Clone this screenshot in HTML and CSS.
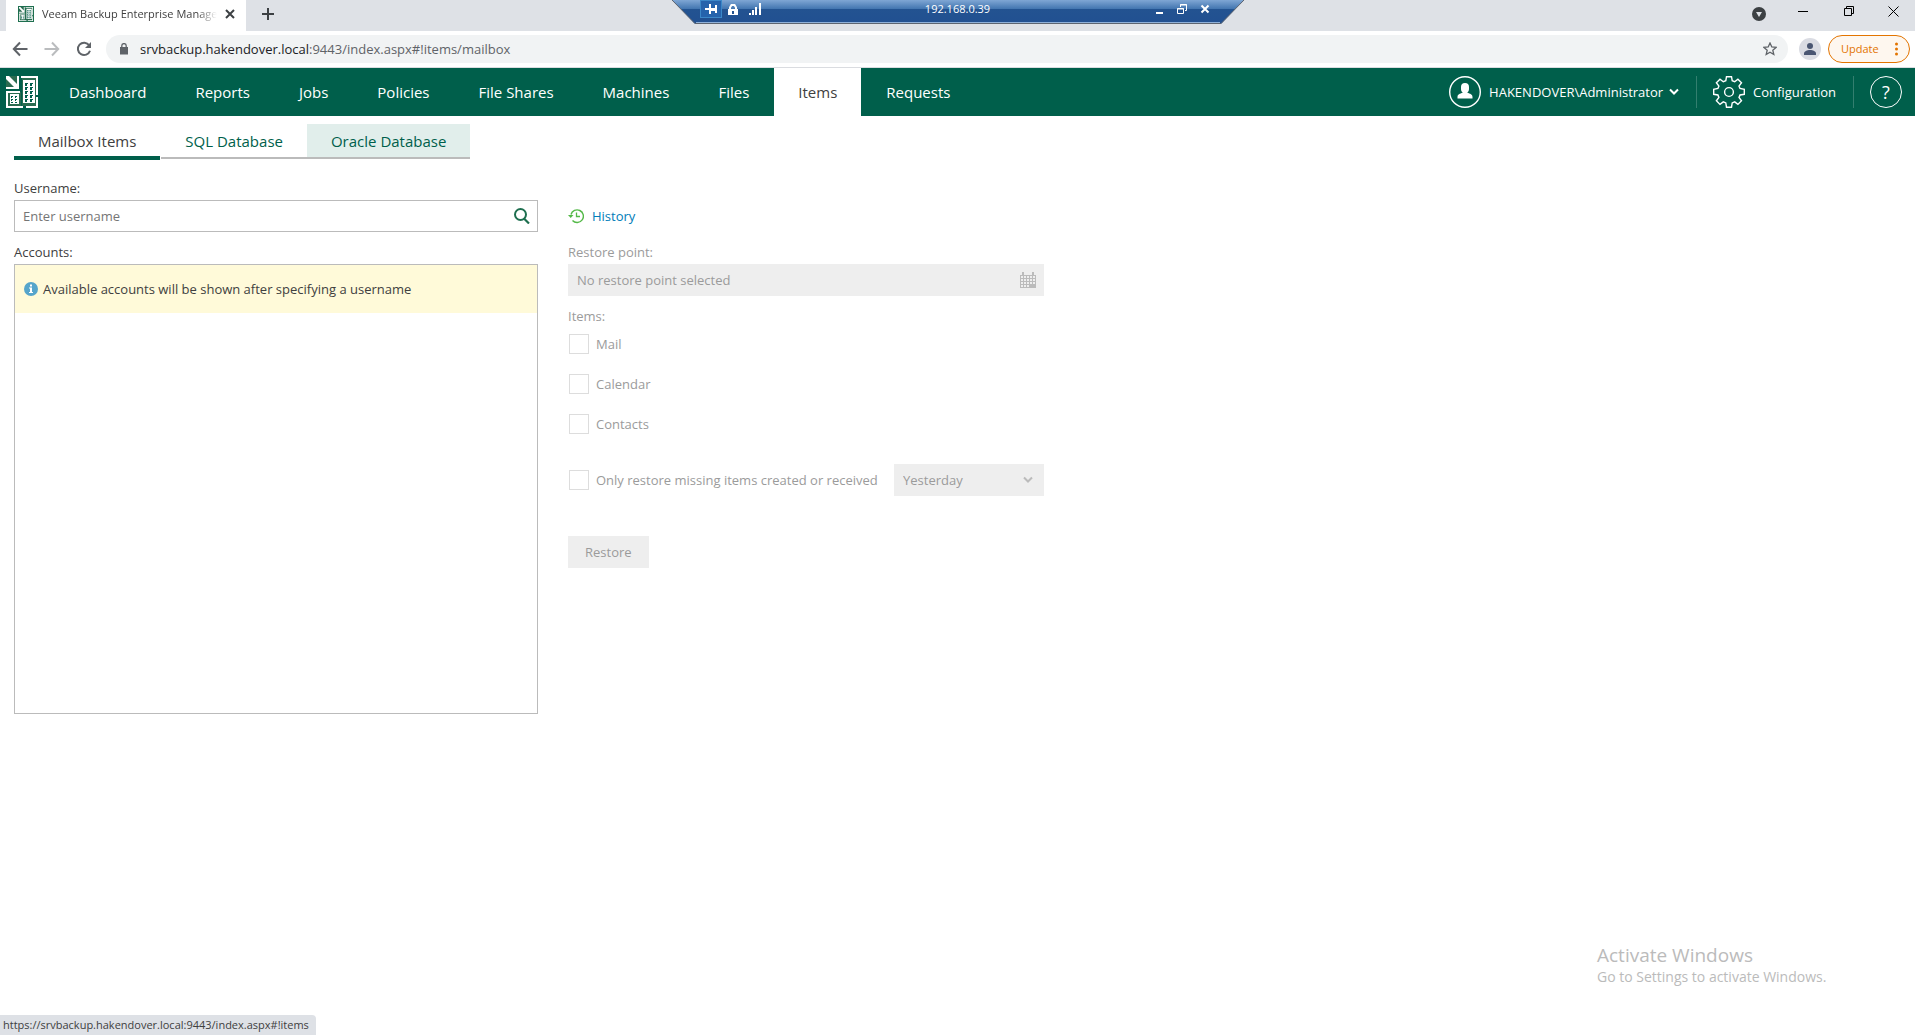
FILE: index.html
```html
<!DOCTYPE html>
<html lang="en">
<head>
<meta charset="utf-8">
<title>Veeam Backup Enterprise Manager</title>
<link rel="stylesheet" href="styles.css">
</head>
<body>
<svg class="defs" width="0" height="0" aria-hidden="true">
  <symbol id="logo" viewBox="0 0 32 32">
    <path fill="#2a6b50" d="M0 0h12v12H0zM16 2h14v28H16zM2 16h13v14H2z"/>
    <g fill="#fff">
      <path d="M0 0h3l8 8V0h2v13H0v-2h8L0 3z"/>
      <path d="M15 0h17v19h-2V2H15zM30 21h2v11H20v-2h10zM0 15h14v2H2v13h15v2H0z"/>
      <path d="M17 4h12v23H17zM4 18h9v10H4z"/>
    </g>
    <g fill="#005f4b">
      <path d="M19 7h3v1h-1v2h-2zM24 7h3v1h-1v2h-2zM19 11h3v1h-1v2h-2zM24 11h3v1h-1v2h-2zM19 15h3v1h-1v2h-2zM24 15h3v1h-1v2h-2zM19 19h3v1h-1v2h-2zM24 19h3v1h-1v2h-2zM19 23h3v1h-1v2h-2zM24 23h3v1h-1v2h-2z"/>
      <path d="M5 20h2v1H6v1H5zM9 20h2v1h-1v1H9zM5 23h2v1H6v1H5zM9 23h2v1h-1v1H9zM5 26h2v1H5zM9 26h2v1H9z"/>
    </g>
  </symbol>
</svg>

<div class="tabstrip">
  <div class="browser-tab">
    <svg class="favicon" width="16" height="16" viewBox="-2 -2 36 36"><path fill="#1e6f4f" d="M-2-2h36v36H-2z"/><use href="#logo" width="32" height="32"/></svg>
    <span class="tab-title">Veeam Backup Enterprise Manager</span>
    <button class="icon-btn tab-close" aria-label="Close tab"><svg width="10" height="10" viewBox="0 0 10 10"><path d="M1 1l8 8M9 1l-8 8" stroke="#3c4043" stroke-width="2"/></svg></button>
  </div>
  <button class="icon-btn new-tab" aria-label="New tab"><svg width="12" height="12" viewBox="0 0 12 12"><path d="M6 0v12M0 6h12" stroke="#3c4043" stroke-width="2"/></svg></button>
  <div class="window-controls">
    <button class="icon-btn tab-search" aria-label="Search tabs"><svg width="14" height="14" viewBox="0 0 14 14"><circle cx="7" cy="7" r="7" fill="#3c4043"/><path d="M4 5h6L7 10z" fill="#dee1e6"/></svg></button>
    <button class="icon-btn" aria-label="Minimize"><svg width="10" height="10" viewBox="0 0 10 10"><path d="M0 5.500h10" stroke="#000"/></svg></button>
    <button class="icon-btn" aria-label="Restore down"><svg width="10" height="10" viewBox="0 0 10 10"><path d="M.5 2.500h7v7h-7zM2.500 2.500v-2h7v7h-2" fill="none" stroke="#000"/></svg></button>
    <button class="icon-btn" aria-label="Close"><svg width="11" height="11" viewBox="0 0 11 11"><path d="M.5.5l10 10M10.500.5l-10 10" stroke="#000"/></svg></button>
  </div>
</div>

<div class="rdp-bar">
  <svg class="rdp-shape" viewBox="0 0 572 25" preserveAspectRatio="none" aria-hidden="true">
    <defs><linearGradient id="rdp" x1="0" y1="0" x2="0" y2="1"><stop offset="0" stop-color="#7fa6d4"/><stop offset=".36" stop-color="#4477b1"/><stop offset=".37" stop-color="#235391"/><stop offset="1" stop-color="#215091"/></linearGradient></defs>
    <path d="M0 0h572l-23 24H23z" fill="url(#rdp)"/>
    <path d="M24 22.500h524" stroke="#8fb0d8"/>
    <path d="M0 0l23 23.500h526L572 0" fill="none" stroke="#5c6470"/>
  </svg>
  <div class="rdp-content">
    <div class="rdp-left">
      <button class="icon-btn pin" aria-label="Pin"><svg width="12" height="10" viewBox="0 0 12 10"><path d="M0 4h5v2H0zM4 0h2v10H4zM6 4h4v3H6zM10 1h2v8h-2z" fill="#fff"/></svg></button>
      <svg width="10" height="11" viewBox="0 0 10 11"><path d="M0 5h10v6H0z" fill="#fff"/><path d="M2 5V3.500L3.500 1h3L8 3.500V5" fill="none" stroke="#fff" stroke-width="2"/><path d="M4 7h2v3H4z" fill="#235391"/></svg>
      <svg width="12" height="12" viewBox="0 0 12 12"><path d="M0 10h2v2H0zM3 7h2v5H3zM6 4h2v8H6zM10 0h2v12h-2z" fill="#fff"/></svg>
    </div>
    <span>192.168.0.39</span>
    <div class="rdp-right">
      <button class="icon-btn" aria-label="Minimize session"><svg width="10" height="10" viewBox="0 0 10 10"><path d="M2 8h7v2H2z" fill="#fff"/></svg></button>
      <button class="icon-btn" aria-label="Restore session"><svg width="10" height="10" viewBox="0 0 10 10"><path d="M.5 4.500h6v5h-6zM3.500 3V.5h6v6H8M0 5h7M3 1h7" fill="none" stroke="#fff"/></svg></button>
      <button class="icon-btn" aria-label="Close session"><svg width="10" height="10" viewBox="0 0 10 10"><path d="M1.500 1.500l7 7M8.500 1.500l-7 7" stroke="#fff" stroke-width="2"/></svg></button>
    </div>
  </div>
</div>

<div class="toolbar">
  <div class="nav-buttons">
    <button class="icon-btn" aria-label="Back"><svg width="16" height="16" viewBox="0 0 16 16"><path d="M8 1.500L1.800 8 8 14.500M2 8h13.500" fill="none" stroke="#5f6368" stroke-width="2"/></svg></button>
    <button class="icon-btn" aria-label="Forward" disabled><svg width="16" height="16" viewBox="0 0 16 16"><path d="M8 1.500L14.200 8 8 14.500M14 8H.5" fill="none" stroke="#babcbe" stroke-width="2"/></svg></button>
    <button class="icon-btn" aria-label="Reload"><svg width="16" height="16" viewBox="0 0 16 16"><path d="M13.200 4.300A6.200 6.200 0 1 0 14 9.800" fill="none" stroke="#5f6368" stroke-width="2"/><path d="M15 1v6H9z" fill="#5f6368"/></svg></button>
  </div>
  <div class="omnibox">
    <svg width="8" height="12" viewBox="0 0 8 12"><path d="M0 4h8v7.500H0z" fill="#5f6368"/><path d="M1.800 5V2.800a2.200 2.200 0 0 1 4.400 0V5" fill="none" stroke="#5f6368" stroke-width="1.300"/></svg>
    <span class="url">srvbackup.hakendover.local<span class="url-rest">:9443/index.aspx#!items/mailbox</span></span>
    <button class="icon-btn star" aria-label="Bookmark"><svg width="14" height="14" viewBox="0 0 14 14"><path d="M7 1l1.800 4 4.200.4-3.200 2.800 1 4.300L7 10.200l-3.800 2.300 1-4.300L1 5.400 5.200 5z" fill="none" stroke="#5f6368" stroke-width="1.300"/></svg></button>
  </div>
  <button class="icon-btn" aria-label="Profile"><svg width="22" height="22" viewBox="0 0 22 22"><circle cx="11" cy="11" r="11" fill="#dadce3"/><circle cx="11" cy="8" r="3" fill="#4a5672"/><path d="M5 17v-1.500c0-2 3-3.500 6-3.500s6 1.500 6 3.500V17z" fill="#4a5672"/></svg></button>
  <button class="update">Update<svg width="3" height="14" viewBox="0 0 3 14"><g fill="#e37400"><circle cx="1.500" cy="2" r="1.500"/><circle cx="1.500" cy="7" r="1.500"/><circle cx="1.500" cy="12" r="1.500"/></g></svg></button>
</div>

<header class="app-header">
  <a class="app-logo" href="#dashboard" aria-label="Home"><svg width="32" height="32"><use href="#logo"/></svg></a>
  <nav class="main-nav">
    <a href="#dashboard">Dashboard</a>
    <a href="#reports">Reports</a>
    <a href="#jobs">Jobs</a>
    <a href="#policies">Policies</a>
    <a href="#shares">File Shares</a>
    <a href="#machines">Machines</a>
    <a href="#files">Files</a>
    <a href="#items" class="active">Items</a>
    <a href="#requests">Requests</a>
  </nav>
  <div class="header-tools">
    <button class="tool user">
      <svg width="32" height="32" viewBox="0 0 32 32"><circle cx="16" cy="16" r="15.300" fill="none" stroke="#fff" stroke-width="1.400"/><path d="M12 11a4 4 0 0 1 8 0v2c0 1.800-.8 3-1.800 3.800 3 .8 5.300 1.700 5.300 4.200v1.500h-15V21c0-2.500 2.300-3.400 5.300-4.200-1-.8-1.800-2-1.800-3.800z" fill="#fff"/></svg>
      <span>HAKENDOVER\Administrator</span>
      <svg class="caret" width="10" height="8" viewBox="0 0 10 8"><path d="M1 1.500l4 4 4-4" fill="none" stroke="#fff" stroke-width="2"/></svg>
    </button>
    <button class="tool config">
      <svg width="32" height="32" viewBox="0 0 32 32"><path d="M13.500.7h5l.7 4 2.500 1 3.200-2.500 3.600 3.600-2.500 3.200 1 2.500 4.300.8v5l-4.300.7-1 2.500 2.500 3.300-3.600 3.600-3.200-2.500-2.500 1-.7 4.300h-5l-.7-4.300-2.500-1-3.300 2.500-3.600-3.600 2.500-3.300-1-2.500-4.200-.7v-5l4.200-.8 1-2.500L3.400 6.800 7 3.200l3.300 2.500 2.500-1z" fill="none" stroke="#fff" stroke-width="1.400"/><circle cx="16" cy="16" r="4.400" fill="none" stroke="#fff" stroke-width="1.400"/></svg>
      <span>Configuration</span>
    </button>
    <button class="help" aria-label="Help">?</button>
  </div>
</header>

<main class="page">
  <nav class="sub-tabs">
    <a href="#mailbox" class="current">Mailbox Items</a>
    <a href="#sql">SQL Database</a>
    <a href="#oracle" class="hovered">Oracle Database</a>
  </nav>
  <div class="columns">
    <section class="accounts">
      <label class="field-label" for="username">Username:</label>
      <div class="search-box">
        <input id="username" type="text" placeholder="Enter username">
        <button class="icon-btn" aria-label="Search"><svg width="16" height="16" viewBox="0 0 16 16"><circle cx="6.500" cy="6.500" r="5.500" fill="none" stroke="#1e6f4f" stroke-width="2"/><path d="M10 10.500l5 5" stroke="#1e6f4f" stroke-width="2.200"/></svg></button>
      </div>
      <h2 class="field-label">Accounts:</h2>
      <div class="account-list">
        <p class="notice"><svg width="14" height="14" viewBox="0 0 14 14"><circle cx="7" cy="7" r="7" fill="#56a5cb"/><path d="M6 2.500h2v2H6zM5 5.500h3V10h1v1H5v-1h1V6.500H5z" fill="#fff"/></svg>Available accounts will be shown after specifying a username</p>
      </div>
    </section>
    <form class="restore">
      <a class="history" href="#history"><svg width="16" height="16" viewBox="0 0 16 16"><path d="M3 6.500A6.300 6.300 0 1 1 4.500 12.500" fill="none" stroke="#54b948" stroke-width="1.400"/><path d="M0 7h5.500L2.700 10z" fill="#54b948"/><path d="M8.500 4.500v4H12" fill="none" stroke="#54b948" stroke-width="1.300"/></svg>History</a>
      <label class="field-label" for="point">Restore point:</label>
      <div class="point-box">
        <input id="point" type="text" value="No restore point selected" disabled>
        <svg width="16" height="16" viewBox="0 0 16 16"><path d="M2 0h2v3H2zM12 0h2v3h-2zM0 3h16v13H0z" fill="#bbb"/><path d="M1 4h2v2H1zM4 4h2v2H4zM7 4h2v2H7zM10 4h2v2h-2zM13 4h2v2h-2zM1 7h2v2H1zM4 7h2v2H4zM7 7h2v2H7zM10 7h2v2h-2zM13 7h2v2h-2zM1 10h2v2H1zM4 10h2v2H4zM7 10h2v2H7zM10 10h2v2h-2zM13 10h2v2h-2zM1 13h2v2H1zM4 13h2v2H4zM7 13h2v2H7z" fill="#eee"/></svg>
      </div>
      <h2 class="field-label">Items:</h2>
      <div class="checks">
        <label class="check"><input type="checkbox" disabled>Mail</label>
        <label class="check"><input type="checkbox" disabled>Calendar</label>
        <label class="check"><input type="checkbox" disabled>Contacts</label>
      </div>
      <div class="missing-row">
        <label class="check"><input type="checkbox" disabled>Only restore missing items created or received</label>
        <div class="select-box">
          <select aria-label="Period" disabled><option>Yesterday</option></select>
          <svg width="10" height="8" viewBox="0 0 10 8"><path d="M1 1.500l4 4 4-4" fill="none" stroke="#bbb" stroke-width="2"/></svg>
        </div>
      </div>
      <button class="restore-btn" type="button" disabled>Restore</button>
    </form>
  </div>
</main>

<div class="watermark"><p class="wm-title">Activate Windows</p><p class="wm-text">Go to Settings to activate Windows.</p></div>
<div class="status">https://srvbackup.hakendover.local:9443/index.aspx#!items</div>
</body>
</html>
```

FILE: styles.css
```css
* { box-sizing: border-box; }

body {
  margin: 0;
  min-height: 100vh;
  display: flex;
  flex-direction: column;
  position: relative;
  background: #fff;
  color: #404040;
  font: 13px/18px "Open Sans", "Noto Sans", sans-serif;
}

button, input, select { font: inherit; color: inherit; }
button { padding: 0; border: 0; background: none; }
svg { display: block; flex: none; }
p, h2 { margin: 0; }
a { color: inherit; text-decoration: none; }
.defs { position: absolute; }
.icon-btn { display: flex; align-items: center; justify-content: center; }

/* Browser frame */
.tabstrip { display: flex; height: 31px; background: #dee1e6; }
.browser-tab {
  display: flex;
  align-items: center;
  width: 240px;
  margin-left: 6px;
  padding: 0 11px 3px 12px;
  background: #fff;
}
.tab-title {
  flex: 1;
  margin: 0 8px;
  overflow: hidden;
  white-space: nowrap;
  font-size: 11px;
  mask-image: linear-gradient(to left, transparent, #000 20px);
}
.new-tab { width: 44px; padding-bottom: 3px; }
.window-controls { display: flex; margin-left: auto; padding-bottom: 9px; }
.window-controls .icon-btn { width: 46px; }
.window-controls .tab-search { width: 42px; padding-top: 6px; }
.window-controls .icon-btn:last-child { width: 43px; }

.rdp-bar { position: absolute; top: 0; left: 0; right: 0; width: 572px; height: 25px; margin: 0 auto; color: #fff; font-size: 11px; }
.rdp-shape { position: absolute; width: 100%; height: 100%; }
.rdp-content { position: relative; display: grid; grid-template-columns: 1fr auto 1fr; align-items: center; height: 18px; padding: 0 28px; }
.rdp-left, .rdp-right { display: flex; align-items: center; }
.rdp-left { gap: 11px; }
.rdp-left .pin { width: 22px; height: 18px; margin-right: -5px; border: 1px solid #3b87c8; background: #2563ac; }
.rdp-right { justify-content: flex-end; gap: 13px; padding-right: 6px; }

.toolbar { display: flex; align-items: center; height: 37px; padding: 0 5px 0 12px; border-bottom: 1px solid #dadce0; }
.nav-buttons { display: flex; gap: 16px; margin-right: 14px; }
.omnibox { flex: 1; display: flex; align-items: center; height: 28px; margin-right: 11px; padding: 0 11px 0 14px; border-radius: 14px; background: #f1f3f4; }
.url { margin-left: 12px; color: #202124; }
.url-rest { color: #5f6368; }
.star { margin-left: auto; }
.update { display: flex; align-items: center; justify-content: space-between; width: 82px; height: 28px; margin-left: 7px; padding: 0 11px 0 12px; border: 1px solid #e37400; border-radius: 14px; background: #fef7ef; color: #e37400; font-size: 11px; }

/* Application header */
.app-header { display: flex; height: 48px; background: #005f4b; color: #fff; }
.app-logo { display: flex; align-items: center; padding: 0 7px 0 6px; }
.main-nav { display: flex; gap: 1px; font-size: 15px; line-height: 48px; }
.main-nav a { padding: 0 24px; }
.main-nav .active { background: #fff; color: #404040; }
.header-tools { display: flex; align-items: center; margin-left: auto; padding-right: 13px; }
.tool { display: flex; align-items: center; gap: 8px; height: 32px; padding-right: 17px; margin-right: 16px; border-right: 1px solid #337f6f; }
.caret { margin-left: -2px; }
.help { width: 32px; height: 32px; border: 1px solid #fff; border-radius: 50%; font-size: 18px; }

/* Page */
.page { padding: 8px 14px 0; }
.sub-tabs { display: flex; font-size: 15px; line-height: 35px; color: #005f4b; }
.sub-tabs a { height: 35px; padding: 0 24px; border-bottom: 2px solid #bbb; }
.sub-tabs .current { height: 36px; margin-right: 1px; border-bottom: 4px solid #005f4b; color: #404040; }
.sub-tabs .hovered { background: #e1eeeb; }
.columns { display: flex; align-items: flex-start; gap: 30px; margin-top: 18px; }
.accounts { width: 524px; }
.restore { width: 476px; padding-top: 22px; color: #9b9b9b; }
.field-label { display: block; height: 22px; font-size: 13px; font-weight: 400; line-height: 20px; }
.search-box { display: flex; align-items: center; height: 32px; margin-bottom: 10px; padding-right: 7px; border: 1px solid #bbb; }
.search-box input { flex: 1; min-width: 0; height: 30px; padding: 0 8px; border: 0; outline: 0; }
.search-box input::placeholder { color: #757575; }
.account-list { height: 450px; border: 1px solid #bbb; }
.notice { display: flex; align-items: center; gap: 5px; height: 48px; padding: 0 9px; background: #fffad9; }
.history { display: flex; align-items: center; gap: 8px; width: max-content; height: 32px; margin-bottom: 10px; color: #007cb8; }
.point-box { display: flex; align-items: center; height: 32px; margin-bottom: 10px; padding-right: 8px; background: #eee; }
.point-box input { flex: 1; min-width: 0; height: 32px; padding: 0 9px; border: 0; background: none; }
.checks { display: grid; gap: 20px; margin-top: 6px; }
.check { display: flex; align-items: center; gap: 7px; height: 20px; }
.check input { appearance: none; width: 20px; height: 20px; margin: 0 0 0 1px; border: 1px solid #ddd; background: #fff; }
.missing-row { display: flex; align-items: center; justify-content: space-between; margin: 30px 0 40px; }
.select-box { display: grid; align-items: center; width: 150px; height: 32px; background: #eee; }
.select-box > * { grid-area: 1 / 1; }
.select-box select { appearance: none; width: 100%; height: 32px; padding: 0 9px; border: 0; background: none; opacity: 1; }
.select-box svg { justify-self: end; margin-right: 11px; }
.restore-btn { padding: 0 17px; height: 32px; background: #eee; }

/* Desktop overlays */
.watermark { position: absolute; right: 80px; bottom: 48px; width: 238px; color: #bbb; }
.wm-title { font-size: 19px; line-height: 24px; }
.wm-text { font-size: 14px; line-height: 20px; }
.status { position: absolute; left: 0; bottom: 0; height: 20px; padding: 0 7px 0 3px; border-radius: 0 4px 0 0; background: #dee1e6; font-size: 11px; line-height: 20px; }
```
